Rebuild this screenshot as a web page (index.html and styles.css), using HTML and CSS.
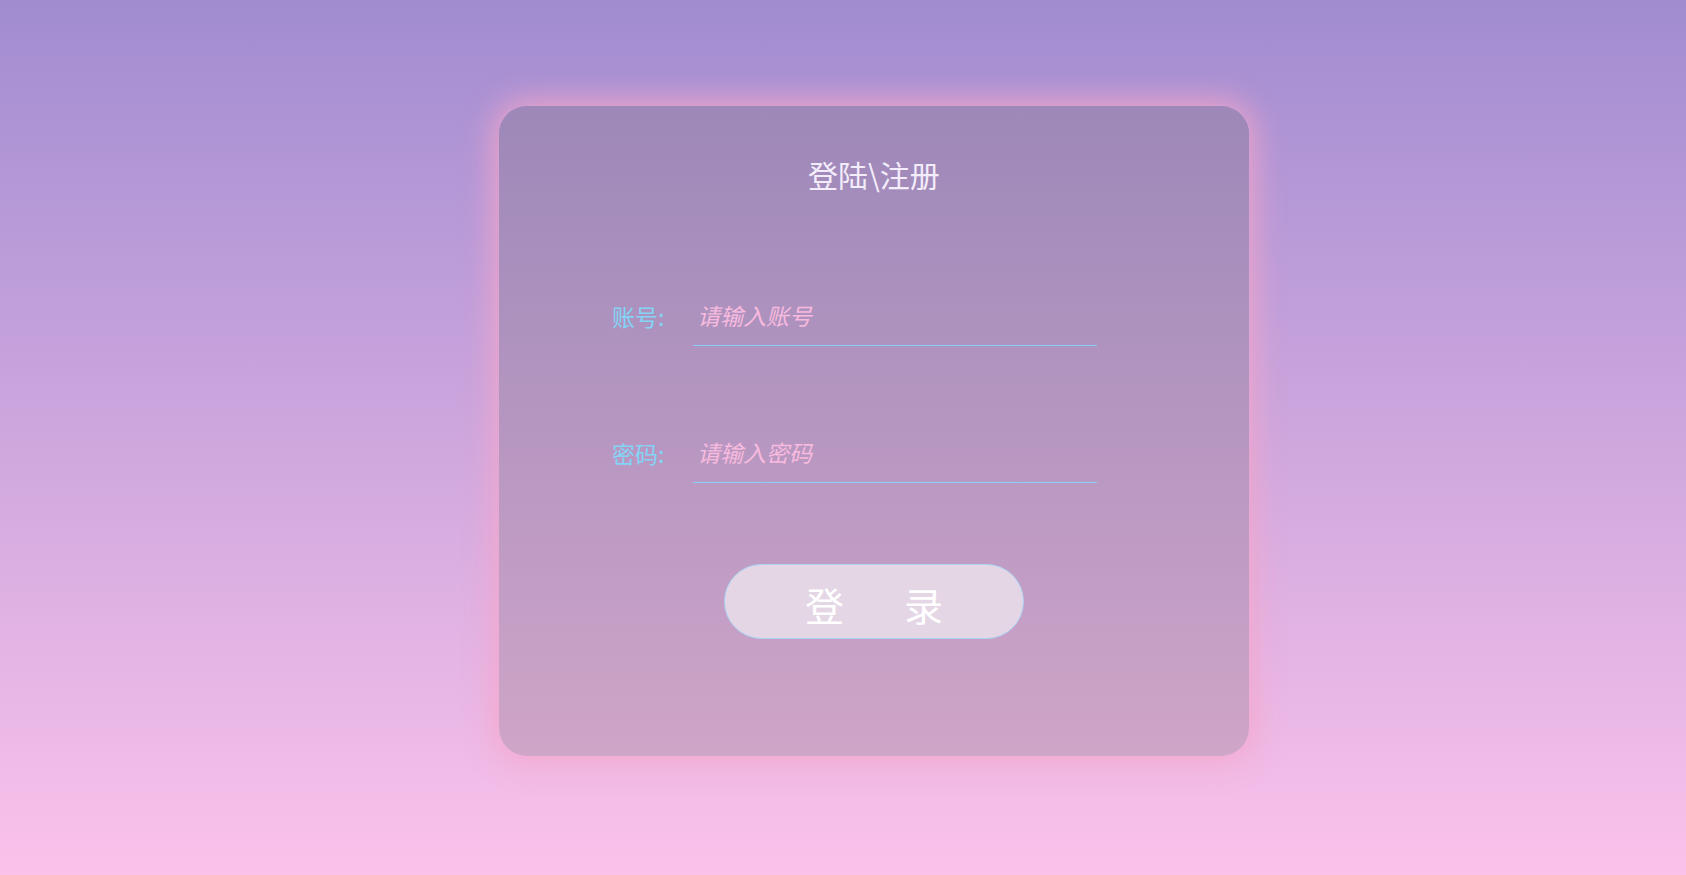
FILE: index.html
```html
<!DOCTYPE html>
<html lang="zh-CN">
<head>
<meta charset="utf-8">
<title>登陆\注册</title>
<link rel="stylesheet" href="styles.css">
</head>
<body>
<div class="card">
  <h1 class="title">登陆\注册</h1>
  <div class="form">
    <div class="row">
      <label class="label">账号:</label>
      <input class="field" type="text" placeholder="请输入账号">
    </div>
    <div class="row">
      <label class="label">密码:</label>
      <input class="field" type="password" placeholder="请输入密码">
    </div>
  </div>
  <button class="btn"><span>登</span><span>录</span></button>
</div>
</body>
</html>
```

FILE: styles.css
```css
html, body {
  margin: 0;
  padding: 0;
  height: 875px;
  overflow: hidden;
}
body {
  background: linear-gradient(to bottom, #a18cd1 0%, #fbc2eb 100%);
  font-family: "Noto Sans CJK SC", "Noto Sans", sans-serif;
}
.card {
  box-sizing: border-box;
  width: 750px;
  height: 650px;
  margin: 106px 0 0 499px;
  border-radius: 28px;
  background: linear-gradient(to bottom, #9d88b9 0%, #cfa5c8 100%);
  box-shadow: 0 0 30px 6px rgba(246, 166, 200, 0.85);
  display: flex;
  flex-direction: column;
  align-items: center;
  padding-top: 48px;
}
.title {
  margin: 0;
  font-size: 30px;
  font-weight: 400;
  line-height: 40px;
  color: #f3ecfa;
}
.form {
  margin-top: 91px;
  display: flex;
  flex-direction: column;
  gap: 76px;
  align-self: flex-start;
  margin-left: 113px;
}
.row {
  display: flex;
  align-items: center;
}
.label {
  width: 81px;
  font-size: 23px;
  color: #84d4f6;
  line-height: 30px;
}
.field {
  box-sizing: border-box;
  width: 404px;
  height: 61px;
  border: none;
  border-bottom: 1px solid #87cefa;
  background: transparent;
  outline: none;
  font-family: "Noto Sans CJK SC", "Noto Sans", sans-serif;
  font-size: 23px;
  font-style: italic;
  color: #ffc0dd;
  padding: 0 0 0 4px;
}
.field::placeholder {
  color: #f8bade;
  font-style: italic;
}
.btn {
  margin-top: 81px;
  width: 300px;
  height: 75px;
  border-radius: 38px;
  border: 1px solid #a9d4f5;
  background: #e5d6e6;
  display: flex;
  justify-content: center;
  align-items: center;
  gap: 60px;
  font-family: "Noto Sans CJK SC", "Noto Sans", sans-serif;
  font-size: 39px;
  color: #ffffff;
  padding: 4px 0 0 0;
}
```
